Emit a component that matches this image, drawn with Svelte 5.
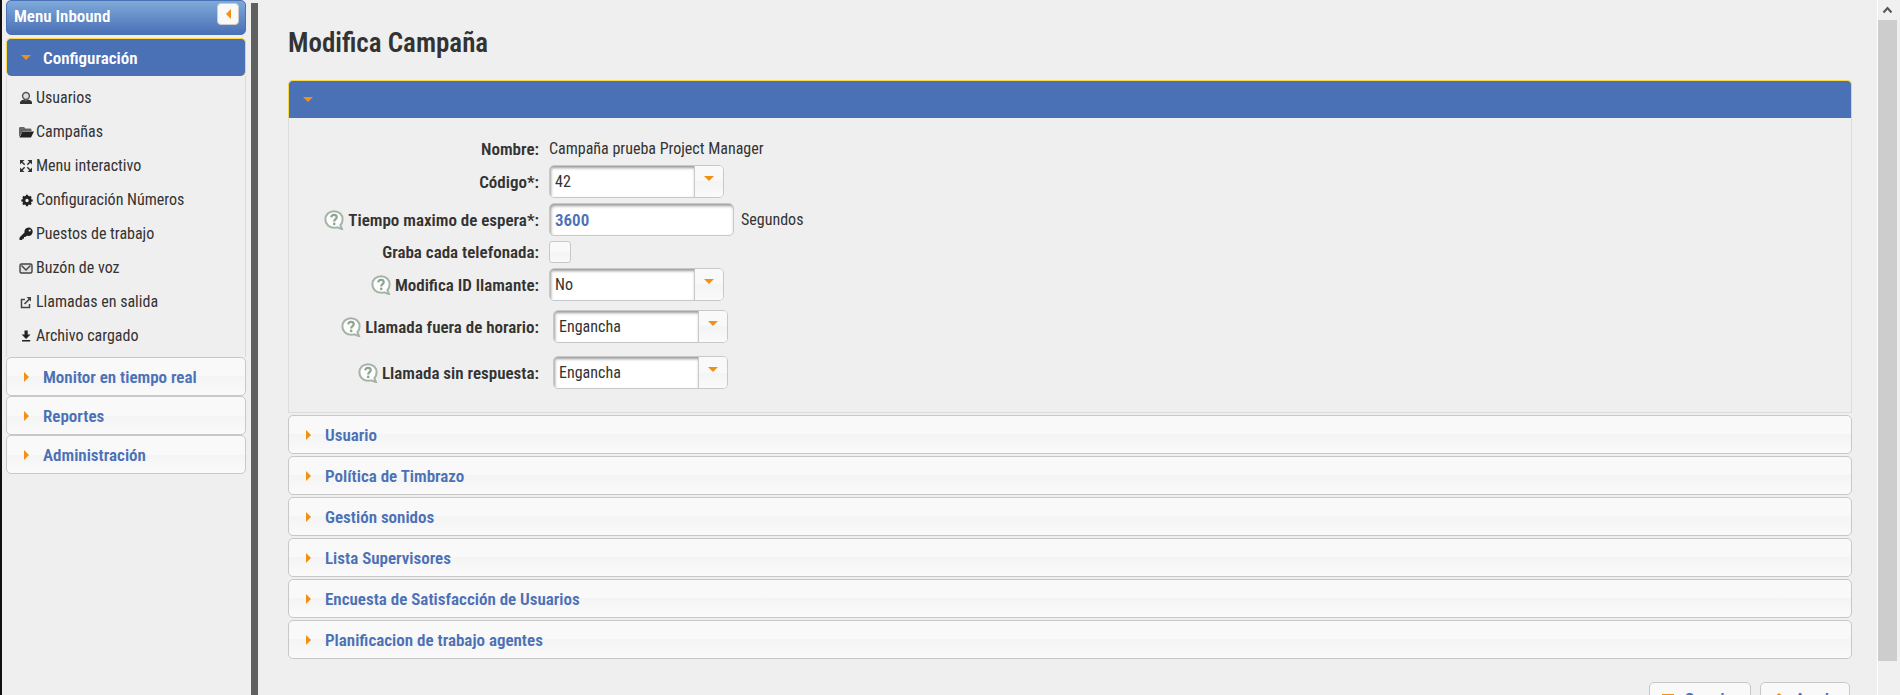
<script>
  let menuOpen = $state(true);
  let panelOpen = $state(true);
  let recordCalls = $state(false);
  let waitTime = $state("3600");

  const links = [
    { icon: "user", label: "Usuarios" },
    { icon: "folder", label: "Campañas" },
    { icon: "expand", label: "Menu interactivo" },
    { icon: "gear", label: "Configuración Números" },
    { icon: "key", label: "Puestos de trabajo" },
    { icon: "mail", label: "Buzón de voz" },
    { icon: "external", label: "Llamadas en salida" },
    { icon: "download", label: "Archivo cargado" },
  ];

  const menus = ["Monitor en tiempo real", "Reportes", "Administración"];

  const sections = [
    "Usuario",
    "Política de Timbrazo",
    "Gestión sonidos",
    "Lista Supervisores",
    "Encuesta de Satisfacción de Usuarios",
    "Planificacion de trabajo agentes",
  ];
</script>

{#snippet help()}
  <svg class="help" viewBox="0 0 20 20" aria-hidden="true">
    <path d="M10 1.200c5 0 8.600 3.500 8.600 8.100 0 2.600-.8 4.600-2.200 6l1.600 3.800-4.900-1.700c-1 .3-2 .4-3.100.4-5 0-8.600-3.800-8.600-8.400S5 1.200 10 1.200z" fill="#fcfdfc" stroke="#a3b3a5" stroke-width="2" />
    <path d="M7.300 7.400c.1-1.700 1.200-2.500 2.700-2.500 1.700 0 2.700 1 2.700 2.300 0 2-2.500 2-2.500 4.300" fill="none" stroke="#8fa392" stroke-width="2.200" />
    <circle cx="10.200" cy="13.900" r="1.300" fill="#8fa392" />
  </svg>
{/snippet}

{#snippet dropdown(id, value)}
  <div class="dropdown">
    <select {id}>
      <option>{value}</option>
    </select>
    <span class="trigger"><span class="caret down"></span></span>
  </div>
{/snippet}

<div class="layout">
  <aside class="sidebar">
    <div class="menu-title">
      <span>Menu Inbound</span>
      <button class="collapse" aria-label="Cerrar menu"><span class="caret left"></span></button>
    </div>

    <button class="header active" aria-expanded={menuOpen} onclick={() => (menuOpen = !menuOpen)}>
      <span class="caret down"></span>Configuración
    </button>
    {#if menuOpen}
      <nav class="links">
        {#each links as link}
          <a href="#{link.icon}">
            <svg viewBox="0 0 16 16" aria-hidden="true">
              {#if link.icon === "user"}
                <circle cx="8" cy="6" r="3.400" fill="#ddd" stroke="#555" stroke-width="1.500" />
                <path d="M2 14v-1.500c0-1.500 2-2.500 4-2.700 1.300.7 2.700.7 4 0 2 .2 4 1.200 4 2.700V14z" fill="#333" />
              {:else if link.icon === "folder"}
                <path d="M1 13V4.500C1 3.500 1.500 3 2.500 3H6l1.500 1.500H12c1 0 1.500.5 1.500 1.500v1H5z" fill="#666" />
                <path d="M4.500 7.500H16L13 13.500H1.500z" fill="#222" />
              {:else if link.icon === "expand"}
                <path d="M2 2h4.500L2 6.500zM14 2v4.500L9.500 2zM2 14V9.500L6.500 14zM14 14H9.500L14 9.500z" fill="#333" />
                <path d="M3 3l3.700 3.700M13 3L9.300 6.700M3 13l3.700-3.700M13 13L9.300 9.300" stroke="#333" stroke-width="1.500" />
              {:else if link.icon === "gear"}
                <circle cx="9" cy="8.500" r="3.200" fill="none" stroke="#222" stroke-width="3" />
                <path d="M9 2.800v2M9 12.200v2M3.300 8.500h2M12.700 8.500h2M5 4.500l1.400 1.400M11.600 11.100L13 12.500M13 4.500l-1.400 1.400M6.400 11.100L5 12.500" stroke="#222" stroke-width="2.200" />
              {:else if link.icon === "key"}
                <path d="M10.500 1.500a4.200 4.200 0 0 1 0 8.400l-1.800-.2L7.500 11H6v1.700H4.300V14H1.500v-2.400l5-5a4.200 4.200 0 0 1 4-5.100z" fill="#222" />
                <circle cx="11.700" cy="4.500" r="1.100" fill="#efefef" />
              {:else if link.icon === "mail"}
                <rect x="2" y="4" width="12" height="9" rx="1.500" fill="#e2e2e2" stroke="#444" stroke-width="1.400" />
                <path d="M3.500 5.500L8 10l4.500-4.500" fill="none" stroke="#444" stroke-width="1.400" />
              {:else if link.icon === "external"}
                <path d="M7 5.500H3.500v8h8V10" fill="none" stroke="#444" stroke-width="1.500" />
                <path d="M8.500 3H13v4.500z" fill="#444" />
                <path d="M6.500 10L12 4.500" stroke="#444" stroke-width="1.700" />
              {:else}
                <path d="M6.500 2.500h3.200v4h2.800L8 11 3.700 6.500h2.800zM4 12h8.200v1.600H4z" fill="#222" />
              {/if}
            </svg>
            {link.label}
          </a>
        {/each}
      </nav>
    {/if}
    {#each menus as menu}
      <button class="header"><span class="caret right"></span>{menu}</button>
    {/each}
  </aside>

  <div class="splitter"></div>

  <main>
    <h1>Modifica Campaña</h1>

    <form class="accordion" onsubmit={(e) => e.preventDefault()}>
      <div>
        <button
          type="button"
          class="header active"
          aria-label="Datos de la campaña"
          aria-expanded={panelOpen}
          onclick={() => (panelOpen = !panelOpen)}
        >
          <span class="caret down"></span>
        </button>
        {#if panelOpen}
          <div class="panel">
            <div class="row">
              <span class="label">Nombre:</span>
              <span>Campaña prueba Project Manager</span>
            </div>
            <div class="row">
              <label class="label" for="codigo">Código*:</label>
              {@render dropdown("codigo", "42")}
            </div>
            <div class="row">
              <label class="label" for="espera">{@render help()}Tiempo maximo de espera*:</label>
              <div class="field">
                <input id="espera" class="text" type="text" bind:value={waitTime} />
                <span>Segundos</span>
              </div>
            </div>
            <div class="row">
              <label class="label" for="graba">Graba cada telefonada:</label>
              <input id="graba" class="check" type="checkbox" bind:checked={recordCalls} />
            </div>
            <div class="row">
              <label class="label" for="llamante">{@render help()}Modifica ID llamante:</label>
              {@render dropdown("llamante", "No")}
            </div>
            <div class="row nested">
              <label class="label" for="horario">{@render help()}Llamada fuera de horario:</label>
              {@render dropdown("horario", "Engancha")}
            </div>
            <div class="row nested">
              <label class="label" for="respuesta">{@render help()}Llamada sin respuesta:</label>
              {@render dropdown("respuesta", "Engancha")}
            </div>
          </div>
        {/if}
      </div>

      {#each sections as section}
        <button type="button" class="header"><span class="caret right"></span>{section}</button>
      {/each}
    </form>

    <div class="actions">
      <button>
        <svg viewBox="0 0 12 12" aria-hidden="true"><path d="M0 1h12v10H0z" fill="#f29111" /><path d="M3 6h6v5H3z" fill="#fff" /></svg>
        Guardar
      </button>
      <button>
        <svg viewBox="0 0 12 12" aria-hidden="true"><path d="M6 0l6 5H10v7H2V5H0z" fill="#f29111" /></svg>
        Ayuda
      </button>
    </div>
  </main>

  <div class="scrollbar" aria-hidden="true">
    <svg viewBox="0 0 20 20"><path d="M5.500 12.500l4-4.500 4 4.500" fill="none" stroke="#555" stroke-width="2" /></svg>
    <div class="thumb"></div>
  </div>
</div>

<style>
  :global(body) {
    background: #efefef;
  }

  .layout {
    display: flex;
    height: 100vh;
    overflow: hidden;
    box-sizing: border-box;
    border-left: 2px solid #111;
    color: #333;
    font-family: "Roboto Condensed", "Liberation Sans Narrow", Roboto, sans-serif;
    font-size: 16px;
    line-height: 22px;
  }

  .layout * {
    box-sizing: border-box;
  }

  button,
  input,
  select {
    margin: 0;
    font: inherit;
    color: inherit;
  }

  button {
    cursor: pointer;
  }

  .sidebar {
    flex: none;
    width: 249px;
    padding: 0 5px 0 4px;
  }

  .menu-title {
    display: flex;
    justify-content: space-between;
    align-items: flex-start;
    height: 35px;
    margin-bottom: 3px;
    padding: 2px 6px 0 7px;
    border: 1px solid #4a70b6;
    border-radius: 5px;
    background: linear-gradient(#7eaad9, #4a70b6);
    color: #fff;
    font-size: 17px;
    font-weight: 600;
  }

  .menu-title span {
    margin-top: 2px;
  }

  .collapse {
    display: flex;
    align-items: center;
    justify-content: center;
    width: 22px;
    height: 22px;
    padding: 0;
    border: 1px solid #ccc;
    border-radius: 4px;
    background: #f9f9f9;
  }

  .collapse .caret {
    margin: 0;
  }

  .caret {
    flex: none;
    border: 5px solid transparent;
  }

  .caret.down {
    border-top-color: #f29111;
    border-bottom-width: 0;
  }

  .caret.right {
    border-left-color: #f29111;
    border-right-width: 0;
    margin: 0 2px 0 3px;
  }

  .caret.left {
    border-right-color: #f29111;
    border-left-width: 0;
  }

  .header {
    display: flex;
    align-items: center;
    gap: 12px;
    width: 100%;
    height: 39px;
    padding: 0 14px;
    border: 1px solid #c8c8c8;
    border-radius: 5px;
    background: linear-gradient(#f9f9f9 50%, #f4f4f4 50%, #fafafa);
    color: #4a70b6;
    font-size: 17px;
    font-weight: 600;
    text-align: left;
  }

  .header.active {
    height: 38px;
    border-color: #f9d84a;
    border-bottom: 0;
    background: #4a70b6;
    color: #fff;
  }

  .links {
    padding: 5px 11px 4px;
    border: solid #dcdcdc;
    border-width: 0 1px;
  }

  .links a {
    display: flex;
    align-items: center;
    gap: 2px;
    height: 34px;
    color: #333;
    text-decoration: none;
  }

  .links svg {
    width: 16px;
    height: 16px;
  }

  .splitter {
    flex: none;
    width: 7px;
    margin-top: 3px;
    background: #606060;
  }

  main {
    flex: 1;
    min-width: 0;
    padding: 26px 25px 0 30px;
  }

  h1 {
    margin: 0 0 20px;
    font-size: 27px;
    line-height: 34px;
    font-weight: 600;
  }

  .accordion {
    display: flex;
    flex-direction: column;
    gap: 2px;
  }

  main .header.active {
    border-radius: 5px 5px 0 0;
  }

  .panel {
    display: flex;
    flex-direction: column;
    gap: 5px;
    padding: 20px 10px 19px;
    border: 1px solid #dcdcdc;
    border-top: 0;
  }

  .row {
    display: grid;
    grid-template-columns: 240px 1fr;
    align-items: center;
    gap: 10px;
  }

  .nested {
    padding: 4px 0;
  }

  .nested .dropdown {
    margin-left: 4px;
  }

  .label {
    display: flex;
    align-items: center;
    justify-content: flex-end;
    gap: 4px;
    font-size: 17px;
    font-weight: 600;
    white-space: nowrap;
  }

  .help {
    width: 20px;
    height: 20px;
  }

  .dropdown {
    display: flex;
    width: 175px;
    height: 33px;
    border: 1px solid #c8c8c8;
    border-radius: 5px;
    background: #f9f9f9;
    overflow: hidden;
  }

  .dropdown select {
    flex: 1;
    min-width: 0;
    padding: 0 5px;
    border: 0;
    border-radius: 0;
    background: #fff;
    box-shadow: inset 1px 2px 3px #999;
    appearance: none;
  }

  .trigger {
    display: flex;
    justify-content: center;
    width: 29px;
    padding-top: 10px;
    border-left: 1px solid #c8c8c8;
    background: linear-gradient(#f9f9f9 50%, #f4f4f4 50%, #fafafa);
  }

  .trigger .caret {
    height: 5px;
  }

  .field {
    display: flex;
    align-items: center;
    gap: 7px;
  }

  .text {
    width: 185px;
    height: 33px;
    padding: 0 5px;
    border: 1px solid #c8c8c8;
    border-radius: 5px;
    background: #fff;
    box-shadow: inset 1px 2px 3px #999;
    color: #4a70b6;
    font-size: 17px;
    font-weight: 600;
  }

  .check {
    width: 22px;
    height: 22px;
    border: 1px solid #c8c8c8;
    border-radius: 3px;
    background: linear-gradient(#f9f9f9 50%, #f4f4f4 50%, #fafafa);
    appearance: none;
  }

  .check:checked {
    background: #f29111;
  }

  .actions {
    display: flex;
    justify-content: flex-end;
    gap: 9px;
    padding: 23px 2px 0 0;
  }

  .actions button {
    display: flex;
    align-items: center;
    gap: 10px;
    height: 34px;
    padding: 0 12px;
    border: 1px solid #c8c8c8;
    border-radius: 5px;
    background: #f9f9f9;
    color: #4a70b6;
    font-size: 17px;
    font-weight: 600;
  }

  .actions svg {
    width: 12px;
    height: 12px;
  }

  .scrollbar {
    display: flex;
    flex: none;
    flex-direction: column;
    width: 23px;
    padding-right: 3px;
    border-left: 1px solid #fff;
    background: #f0f0f0;
  }

  .scrollbar svg {
    width: 20px;
    height: 20px;
  }

  .thumb {
    width: 19px;
    height: calc((100% - 20px) * 0.95);
    background: #cdcdcd;
  }
</style>
